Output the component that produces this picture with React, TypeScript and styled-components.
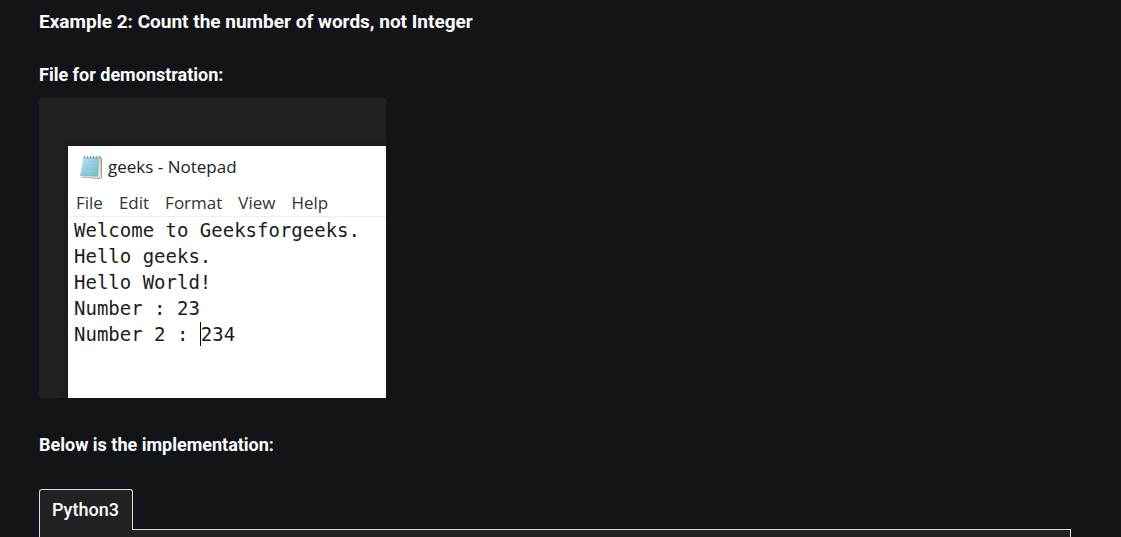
import React from "react";
import styled, { createGlobalStyle } from "styled-components";

const GlobalStyle = createGlobalStyle`
  * { box-sizing: border-box; }
  body {
    margin: 0;
    background: #131418;
    color: #fff;
    font-family: Roboto, "Liberation Sans", sans-serif;
  }
`;

const Article = styled.main`
  display: flex;
  flex-direction: column;
  align-items: flex-start;
  padding: 8px 50px 0 39px;
`;

const Title = styled.h2`
  margin: 0 0 26px;
  font-size: 19px;
  line-height: 28px;
  font-weight: 700;
`;

const Lead = styled.p`
  margin: 0;
  font-size: 18px;
  line-height: 26px;
  font-weight: 700;
`;

const Figure = styled.figure`
  width: 347px;
  height: 300px;
  margin: 10px 0 34px;
  padding: 48px 0 0 29px;
  background: #222;
  overflow: hidden;
`;

const Notepad = styled.section`
  height: 100%;
  background: #fff;
  color: #222;
  font-family: "Open Sans", "Noto Sans", sans-serif;
  box-shadow: 0 0 10px #151515;
`;

const TitleBar = styled.header`
  display: flex;
  align-items: center;
  gap: 4px;
  height: 42px;
  padding-left: 11px;
  font-size: 17px;
  line-height: 24px;
`;

const MenuBar = styled.nav`
  display: flex;
  align-items: flex-end;
  gap: 16px;
  height: 29px;
  padding-left: 8px;
  border-bottom: 1px solid #eee;
`;

const MenuItem = styled.button`
  padding: 0;
  border: 0;
  background: none;
  color: #333;
  font: inherit;
  font-size: 17px;
  line-height: 26px;
`;

const Document = styled.div`
  padding-left: 6px;
  color: #1c1c1c;
  font-family: "DejaVu Sans Mono", monospace;
  font-size: 19px;
  line-height: 26px;
  white-space: pre;
`;

const Line = styled.div`
  display: flex;
  align-items: center;
  height: 26px;
`;

const Caret = styled.span`
  width: 1px;
  height: 24px;
  background: #000;
`;

const CodeTabs = styled.section`
  align-self: stretch;
  margin-top: 31px;
`;

const Tab = styled.button`
  position: relative;
  display: block;
  height: 41px;
  padding: 0 13px 0 12px;
  border: 1px solid #ddd;
  border-bottom: 0;
  border-radius: 3px 3px 0 0;
  background: #222;
  color: #fff;
  font: 500 18px/40px Roboto, sans-serif;
`;

const Panel = styled.div`
  min-height: 8px;
  margin-top: -1px;
  border: 1px solid #ddd;
  border-bottom: 0;
  background: #222;
`;

const NotepadIcon = () => (
  <svg width="25" height="26" viewBox="0 0 25 26" aria-hidden="true">
    <defs>
      <linearGradient id="cover" x1="0" y1="0" x2="1" y2="1">
        <stop offset="0" stopColor="#c2e6ee" />
        <stop offset="0.5" stopColor="#8fcbdc" />
        <stop offset="1" stopColor="#6fb6ca" />
      </linearGradient>
    </defs>
    <path d="M6 3H22L23 4V24L20 25L2 23.500Z" fill="#a89c8a" />
    <path d="M6 3H21.500L22 23.500L19 24L2 23Z" fill="#e8e0d2" />
    <path d="M4.500 3H20.500L19 22.500L1 22Z" fill="url(#cover)" />
    <path d="M4 9L19 9M3.500 13H18.500M3 17H18" stroke="#b2dde7" strokeWidth="0.700" opacity="0.600" />
    <path d="M5 4.500L6 2M8 4.500L9 2M11 4.500L12 2M14 4.500L15 2M17 4.500L18 2M20 4.500L21 2" stroke="#7d9196" strokeWidth="1.100" />
  </svg>
);

const menus = ["File", "Edit", "Format", "View", "Help"];
const lines = ["Welcome to Geeksforgeeks.", "Hello geeks.", "Hello World!", "Number : 23"];

export default function App() {
  return (
    <>
      <GlobalStyle />
      <Article>
        <Title>Example 2: Count the number of words, not Integer</Title>
        <Lead>File for demonstration:</Lead>
        <Figure>
          <Notepad>
            <TitleBar>
              <NotepadIcon />
              geeks - Notepad
            </TitleBar>
            <MenuBar>
              {menus.map((name) => (
                <MenuItem key={name} type="button">{name}</MenuItem>
              ))}
            </MenuBar>
            <Document>
              {lines.map((line) => (
                <Line key={line}>{line}</Line>
              ))}
              <Line>
                <span>{"Number 2 : "}</span>
                <Caret />
                <span>234</span>
              </Line>
            </Document>
          </Notepad>
        </Figure>
        <Lead>Below is the implementation:</Lead>
        <CodeTabs>
          <Tab type="button">Python3</Tab>
          <Panel />
        </CodeTabs>
      </Article>
    </>
  );
}
